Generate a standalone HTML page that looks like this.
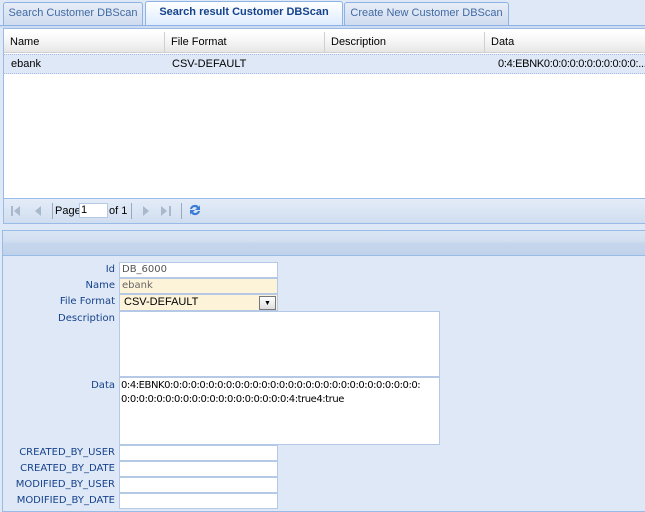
<!DOCTYPE html>
<html><head><style>
*{box-sizing:border-box;margin:0;padding:0}
body{width:645px;height:512px;overflow:hidden;background:#dfe8f6;font:11px "Liberation Sans",Arial,sans-serif;position:relative}
.abs{position:absolute}
.tab{position:absolute;top:2px;height:23px;border:1px solid #8db2e3;border-bottom:none;border-radius:3px 3px 0 0;background:linear-gradient(#e8eef7,#cfdbef);color:#416aa3;font-size:11px;text-align:center;line-height:20px}
.tab.act{background:linear-gradient(#fff,#deecfd);color:#15428b;font-weight:bold;height:24px;top:1px;z-index:2}
.hd{position:absolute;top:32px;height:21px;border-right:1px solid #d0d0d0;padding-left:6px;line-height:21px;color:#000;font-size:11px}
.lbl{position:absolute;right:530px;text-align:right;color:#15428b;font-family:"DejaVu Sans",sans-serif;font-size:10px}
.f{position:absolute;left:119px;background:#fff;border:1px solid #b5c8e6;font-family:"DejaVu Sans",sans-serif;font-size:10px;padding-left:2px;line-height:14px}
</style></head><body>
<div class="abs" style="left:0;top:0;width:645px;height:26px;background:#dfe8f6"></div>
<div class="tab" style="left:3px;width:140px">Search Customer DBScan</div>
<div class="tab act" style="left:145px;width:198px">Search result Customer DBScan</div>
<div class="tab" style="left:344px;width:165px">Create New Customer DBScan</div>
<div class="abs" style="left:0;top:25px;width:645px;height:3px;background:#cddcf2;border-top:1px solid #8db2e3"></div>
<div class="abs" style="left:3px;top:28px;width:642px;height:196px;border:1px solid #99bbe8;border-right:none;background:#fff"></div>
<div class="abs" style="left:4px;top:32px;width:641px;height:21px;background:linear-gradient(#fff,#f2f2f2 60%,#e6e6e6);border-bottom:1px solid #d0d0d0"></div>
<div class="abs" style="left:4px;top:29px;width:641px;height:3px;background:#fff"></div>
<div class="hd" style="left:4px;width:161px">Name</div>
<div class="hd" style="left:165px;width:160px">File Format</div>
<div class="hd" style="left:325px;width:160px">Description</div>
<div class="hd" style="left:485px;width:160px;border-right:none">Data</div>
<div class="abs" style="left:4px;top:54px;width:641px;height:20px;background:#dfe8f6;border-top:1px dotted #a3bae9;border-bottom:1px dotted #a3bae9"></div>
<div class="abs" style="left:11px;top:58px">ebank</div>
<div class="abs" style="left:172px;top:58px">CSV-DEFAULT</div>
<div class="abs" style="left:498px;top:58px;white-space:nowrap;letter-spacing:-0.3px">0:4:EBNK0:0:0:0:0:0:0:0:0:0:0:...</div>
<div class="abs" style="left:4px;top:198px;width:641px;height:25px;background:linear-gradient(#e4ecf8,#d0def0);border-top:1px solid #99bbe8"></div>
<svg class="abs" style="left:10px;top:205px" width="40" height="12" viewBox="0 0 40 12"><rect x="1" y="1" width="2" height="10" fill="#aab8cc"/><path d="M10 1v10l-6-5z" fill="#aab8cc"/><path d="M31 1v10l-6-5z" fill="#aab8cc"/></svg>
<div class="abs" style="left:52px;top:203px;width:1px;height:16px;background:#9ab"></div>
<div class="abs" style="left:55px;top:205px">Page</div>
<div class="abs" style="left:79px;top:203px;width:29px;height:15px;background:#fff;border:1px solid #b5c8e6;padding-left:1px;line-height:13px">1</div>
<div class="abs" style="left:109px;top:205px">of 1</div>
<div class="abs" style="left:131px;top:203px;width:1px;height:16px;background:#9ab"></div>
<svg class="abs" style="left:140px;top:205px" width="40" height="12" viewBox="0 0 40 12"><path d="M3 1v10l6-5z" fill="#aab8cc"/><path d="M21 1v10l6-5z" fill="#aab8cc"/><rect x="29" y="1" width="2" height="10" fill="#aab8cc"/></svg>
<div class="abs" style="left:181px;top:203px;width:1px;height:16px;background:#9ab"></div>
<svg class="abs" style="left:187px;top:202px" width="16" height="16" viewBox="0 0 16 16"><path d="M3 7a5 5 0 0 1 9-2l1-2v5h-5l2-2a3 3 0 0 0-5 1z" fill="#3a7bd5"/><path d="M13 9a5 5 0 0 1-9 2l-1 2V8h5l-2 2a3 3 0 0 0 5-1z" fill="#3a7bd5"/></svg>
<div class="abs" style="left:2px;top:230px;width:643px;height:282px;border:1px solid #99bbe8;border-right:none;background:#dfe8f6"></div>
<div class="abs" style="left:3px;top:231px;width:642px;height:25px;background:linear-gradient(#dae6f4 0,#d0def0 45%,#c6d6ec 50%,#c0d2ea);border-bottom:1px solid #99bbe8"></div>
<div class="lbl" style="top:264px">Id</div>
<div class="f" style="top:262px;width:159px;height:16px;color:#555">DB_6000</div>
<div class="lbl" style="top:280px">Name</div>
<div class="f" style="top:278px;width:159px;height:16px;background:#fdf3d9;color:#666">ebank</div>
<div class="lbl" style="top:296px">File Format</div>
<div class="f" style="top:294px;width:159px;height:17px;background:#fdf3d9;color:#000;padding-left:4px;font-family:'Liberation Sans',sans-serif;font-size:11px;line-height:15px">CSV-DEFAULT</div>
<div class="abs" style="left:259px;top:296px;width:17px;height:14px;border:1px solid #777;background:linear-gradient(#fff,#ddd);font-size:7px;text-align:center;line-height:14px">▼</div>
<div class="lbl" style="top:313px">Description</div>
<div class="f" style="top:311px;width:321px;height:66px"></div>
<div class="lbl" style="top:380px">Data</div>
<div class="f" style="top:377px;width:321px;height:68px;color:#000;padding-top:1px;line-height:14px;padding-left:1px;letter-spacing:-0.45px;white-space:nowrap;overflow:hidden">0:4:EBNK0:0:0:0:0:0:0:0:0:0:0:0:0:0:0:0:0:0:0:0:0:0:0:0:0:0:0:0:0:<br>0:0:0:0:0:0:0:0:0:0:0:0:0:0:0:0:0:0:0:4:true4:true</div>
<div class="lbl" style="top:447px">CREATED_BY_USER</div>
<div class="f" style="top:445px;width:159px;height:16px"></div>
<div class="lbl" style="top:463px">CREATED_BY_DATE</div>
<div class="f" style="top:461px;width:159px;height:16px"></div>
<div class="lbl" style="top:479px">MODIFIED_BY_USER</div>
<div class="f" style="top:477px;width:159px;height:16px"></div>
<div class="lbl" style="top:495px">MODIFIED_BY_DATE</div>
<div class="f" style="top:493px;width:159px;height:16px"></div>
</body></html>
